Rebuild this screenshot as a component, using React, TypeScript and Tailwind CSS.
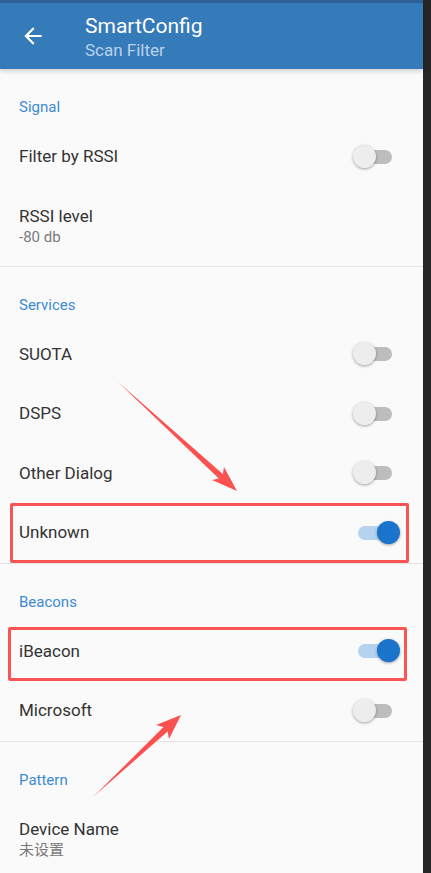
const font = { fontFamily: "Roboto, 'Noto Sans CJK SC', sans-serif" };

const Toggle = ({ on }: { on: boolean }) => {
  return (
    <div className="relative w-[47px] h-[24px] mr-[4px]">
      <div
        className={
          "absolute left-[5px] top-[5px] w-[34px] h-[14px] rounded-full " +
          (on ? "bg-[#b5d2ef]" : "bg-[#bdbdbd]")
        }
      />
      <div
        className={
          "absolute top-0 w-[23px] h-[23px] rounded-full shadow-[0_1px_3px_rgba(0,0,0,0.35)] " +
          (on ? "left-[24px] bg-[#1a74cc]" : "left-0 bg-[#ededed]")
        }
      />
    </div>
  );
};

const Header = ({ title }: { title: string }) => (
  <div className="h-[58px] pt-[28px] px-[19px]">
    <div className="text-[15px] leading-[20px] text-[#3d8ad4]">{title}</div>
  </div>
);

const SwitchRow = ({ label, on = false }: { label: string; on?: boolean }) => (
  <div className="h-[59.5px] flex items-center justify-between pl-[19px] pr-[19px]">
    <span className="text-[17px] text-[#333333]">{label}</span>
    <Toggle on={on} />
  </div>
);

const TwoLineRow = ({ title, sub }: { title: string; sub: string }) => (
  <div className="h-[79px] pt-[18.5px] px-[19px]">
    <div className="text-[17px] leading-[22px] text-[#333333]">{title}</div>
    <div className="text-[15px] leading-[20px] text-[#7a7a7a]">{sub}</div>
  </div>
);

const Divider = () => <div className="h-px bg-[#e3e3e3]" />;

export default function App() {
  return (
    <div className="relative flex w-[431px] h-[873px] overflow-hidden" style={font}>
      <div className="flex-1 min-w-0 bg-[#fafafa]">
        <div className="h-[3px] bg-[#2d6399]" />
        <div className="relative z-10 h-[66px] bg-[#357ab9] shadow-[0_2px_5px_rgba(0,0,0,0.18)] flex items-center">
          <div className="w-[85px] flex justify-center pr-[19px]">
            <svg width="26" height="26" viewBox="0 0 24 24" fill="white">
              <path d="M20 11H7.83l5.59-5.59L12 4l-8 8 8 8 1.41-1.41L7.83 13H20v-2z" />
            </svg>
          </div>
          <div className="flex flex-col mt-[2px]">
            <span className="text-[21px] leading-[26px] text-white">SmartConfig</span>
            <span className="text-[17px] leading-[22px] text-[#b9d2ea]">Scan Filter</span>
          </div>
        </div>

        <Header title="Signal" />
        <SwitchRow label="Filter by RSSI" />
        <TwoLineRow title="RSSI level" sub="-80 db" />
        <Divider />

        <Header title="Services" />
        <SwitchRow label="SUOTA" />
        <SwitchRow label="DSPS" />
        <SwitchRow label="Other Dialog" />
        <SwitchRow label="Unknown" on />
        <Divider />

        <Header title="Beacons" />
        <SwitchRow label="iBeacon" on />
        <SwitchRow label="Microsoft" />
        <Divider />

        <Header title="Pattern" />
        <TwoLineRow title="Device Name" sub="未设置" />
      </div>
      <div className="w-[8px] shrink-0 bg-[#262626]" />

      {/* annotation overlays */}
      <div className="absolute left-[10px] top-[503px] w-[399px] h-[60px] border-[3px] border-[#fb5454] rounded-[2px]" />
      <div className="absolute left-[8px] top-[627px] w-[399px] h-[54px] border-[3px] border-[#fb5454] rounded-[2px]" />
      <svg className="absolute left-0 top-0 pointer-events-none" width="431" height="873">
        <polygon
          fill="#fc5151"
          points="118,382 218.8,478.4 212,480 237,491 224,467 222.8,474"
        />
        <polygon
          fill="#fc5151"
          points="93,797 163.5,727.1 156,725 181,715 169,739 167.6,731.5"
        />
      </svg>
    </div>
  );
}
